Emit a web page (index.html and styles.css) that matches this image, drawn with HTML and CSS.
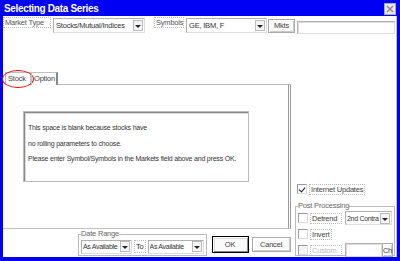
FILE: index.html
```html
<!DOCTYPE html>
<html>
<head>
<meta charset="utf-8">
<link rel="stylesheet" href="styles.css">
</head>
<body>
<div class="window">
  <div class="titlebar">
    <span class="title">Selecting Data Series</span>
    <span class="close"><svg width="10" height="10" viewBox="0 0 10 10"><path d="M2 2 L8 8 M8 2 L2 8" stroke="#888" stroke-width="1.4"/></svg></span>
  </div>
  <div class="client">
    <div class="toprow">
      <span class="lbl lbl-market">Market Type</span>
      <span class="combo combo-market"><span class="ctext">Stocks/Mutual/Indices</span><span class="dd"></span></span>
      <span class="lbl lbl-sym">Symbols</span>
      <span class="combo combo-sym"><span class="ctext">GE, IBM, F</span><span class="dd"></span></span>
      <span class="btn btn-mkts">Mkts</span>
      <span class="textbox tb-top"></span>
    </div>
    <div class="middle">
      <div class="leftcol">
        <div class="tabs">
          <span class="tab tab-stock">Stock</span>
          <span class="tab tab-option">Option</span>
          <span class="tabline"></span>
        </div>
        <div class="panel">
          <div class="msg">
            <p>This space is blank because stocks have</p>
            <p>no rolling parameters to choose.</p>
            <p>Please enter Symbol/Symbols in the Markets field above and press OK.</p>
          </div>
        </div>
        <div class="bottomrow">
          <fieldset class="daterange">
            <legend>Date Range</legend>
            <span class="combo combo-date"><span class="ctext">As Available</span><span class="dd"></span></span>
            <span class="to">To</span>
            <span class="combo combo-date2"><span class="ctext">As Available</span><span class="dd"></span></span>
          </fieldset>
          <span class="btn btn-ok">OK</span>
          <span class="btn btn-cancel">Cancel</span>
        </div>
      </div>
      <div class="rightcol">
        <div class="chkrow inet"><span class="chk checked"></span><span class="chklbl">Internet Updates</span></div>
        <fieldset class="post">
          <legend>Post Processing</legend>
          <div class="prow"><span class="chk"></span><span class="chklbl w1">Detrend</span><span class="combo combo-contra"><span class="ctext">2nd Contra</span><span class="dd"></span></span></div>
          <div class="prow"><span class="chk"></span><span class="chklbl">Invert</span></div>
          <div class="prow"><span class="chk dis"></span><span class="chklbl w1 disabled">Custom</span><span class="textbox tb-custom"></span><span class="btn btn-ch">Ch</span></div>
        </fieldset>
      </div>
    </div>
  </div>
</div>
</body>
</html>
```
FILE: styles.css
```css
* { box-sizing: border-box; }
html, body { margin: 0; padding: 0; }
body { width: 400px; height: 261px; overflow: hidden; font-family: "Liberation Sans", Arial, sans-serif; font-size: 7.5px; letter-spacing: -0.2px; color: #333; }
.window { width: 400px; height: 261px; background: #0000f4; padding: 0 3px 4px 3px; display: flex; flex-direction: column; }
.titlebar { height: 16px; display: flex; align-items: center; justify-content: space-between; padding: 0 1px 0 1px; }
.title { color: #fff; font-weight: bold; font-size: 10px; letter-spacing: -0.35px; }
.close { width: 12px; height: 12px; background: #e8e8e8; border: 1px solid #aaa; display: flex; align-items: center; justify-content: center; margin-top: 2px; }
.client { flex: 1; background: #fff; border-right: 1px solid #c0c0c0; display: flex; flex-direction: column; }
.toprow { height: 17px; display: flex; align-items: center; margin-top: 1px; }
.lbl { border: 1px dotted #bbb; padding: 0 1px; height: 11px; line-height: 9px; align-self: flex-start; color: #555; white-space: nowrap; overflow: hidden; }
.lbl-market { width: 48px; margin-left: 0; }
.lbl-sym { width: 30px; margin-left: 9px; }
.combo { display: flex; align-items: center; height: 15px; border: 1px solid #b0b0b0; border-right-color: #ddd; border-bottom-color: #ddd; padding-left: 2px; background: #fff; }
.ctext { flex: 1; white-space: nowrap; overflow: hidden; }
.dd { flex: none; width: 10px; height: 11px; border: 1px solid #bbb; margin-right: 1px; position: relative; background: #f4f4f4; }
.dd::after { content: ""; position: absolute; left: 1px; top: 4px; border-left: 3px solid transparent; border-right: 3px solid transparent; border-top: 3px solid #223; }
.combo-market { width: 92px; margin-left: 2px; }
.combo-sym { width: 81px; margin-left: 2px; }
.btn { display: inline-flex; align-items: center; justify-content: center; border: 1px solid #aaa; box-shadow: inset 1px 1px 0 #fff, inset -1px -1px 0 #ccc; background: #fafafa; color: #444; white-space: nowrap; }
.btn-mkts { width: 27px; height: 14px; margin-left: 1px; }
.textbox { border: 1px solid #b0b0b0; border-right-color: #ddd; border-bottom-color: #ddd; box-shadow: inset 1px 1px 0 #ddd; background: #fff; }
.tb-top { flex: 1; height: 13px; margin-left: 2px; margin-right: 1px; align-self: flex-end; }
.middle { flex: 1; display: flex; }
.leftcol { width: 289px; display: flex; flex-direction: column; }
.tabs { margin-top: 37px; height: 14px; display: flex; align-items: flex-end; }
.tab { height: 13px; border: 1px solid #c0c0c0; border-bottom: none; padding: 0 2px; line-height: 11px; color: #444; position: relative; }
.tab-stock { margin-left: 2px; width: 26px; }
.tab-stock::after { content: ""; position: absolute; left: -4px; top: -3px; width: 30px; height: 16px; border: 1px solid #e00; border-radius: 50%; }
.tab-option { width: 27px; border-right: 2px solid #888; }
.tabline { flex: 1; border-bottom: 1px solid #b8b8b8; }
.panel { height: 144px; border-right: 3px double #999; border-bottom: 1px solid #c0c0c0; padding: 26px 0 0 20px; }
.msg { width: 226px; height: 71px; border: 1px solid #bbb; box-shadow: inset 1px 1px 0 #888, inset 2px 2px 0 #ddd; padding: 11px 0 0 4px; font-size: 7px; letter-spacing: -0.2px; color: #333; }
.msg p { margin: 0 0 6.5px 0; line-height: 9px; white-space: nowrap; }
.bottomrow { flex: 1; display: flex; align-items: flex-end; padding-bottom: 1px; }
fieldset { margin: 0; padding: 0; border: 1px solid #bbb; box-shadow: 1px 1px 0 #fff inset; }
legend { padding: 0; font-size: 7.5px; color: #666; line-height: 8px; }
.daterange { margin-left: 75px; width: 125px; height: 26px; display: flex; align-items: center; padding: 0 2px; }
.combo-date, .combo-date2 { height: 14px; font-size: 7px; letter-spacing: -0.3px; padding-left: 1px; }
.combo-date { width: 51px; }
.combo-date2 { width: 56px; }
.to { margin: 0 2px; border: 1px dotted #bbb; height: 13px; line-height: 11px; padding: 0 1px; }
.btn-ok { width: 37px; height: 17px; margin-left: 5px; margin-bottom: 3px; border: 1px solid #000; box-shadow: inset 1px 1px 0 #fff, inset -1px -1px 0 #888, inset 2px 2px 0 #ddd; }
.btn-cancel { width: 39px; height: 15px; margin-left: 3px; margin-bottom: 4px; }
.rightcol { flex: 1; display: flex; flex-direction: column; justify-content: flex-end; padding-left: 4px; padding-right: 1px; padding-bottom: 1px; }
.chkrow { display: flex; align-items: center; height: 12px; }
.inet { margin-left: 2px; margin-bottom: 7px; }
.chk { flex: none; width: 10px; height: 10px; border: 1px solid #999; border-right-color: #ddd; border-bottom-color: #ddd; background: #fff; position: relative; }
.chk.checked::after { content: ""; position: absolute; left: 2px; top: 1px; width: 3px; height: 5px; border-right: 1.5px solid #115; border-bottom: 1.5px solid #115; transform: rotate(40deg); }
.chk.dis { background: #f4f4f4; }
.chklbl { margin-left: 2px; border: 1px dotted #bbb; padding: 0 1px; height: 11px; line-height: 9px; color: #444; white-space: nowrap; }
.chklbl.w1 { width: 32px; }
.disabled { color: #bbb; }
.post { height: 54px; padding: 0 1px 0 2px; display: flex; flex-direction: column; }
.prow { display: flex; align-items: center; height: 16px; }
.combo-contra { width: 47px; height: 14px; margin-left: 3px; font-size: 7px; letter-spacing: -0.3px; padding-left: 1px; }
.tb-custom { width: 37px; height: 14px; margin-left: 3px; }
.btn-ch { width: 11px; height: 14px; }
```
